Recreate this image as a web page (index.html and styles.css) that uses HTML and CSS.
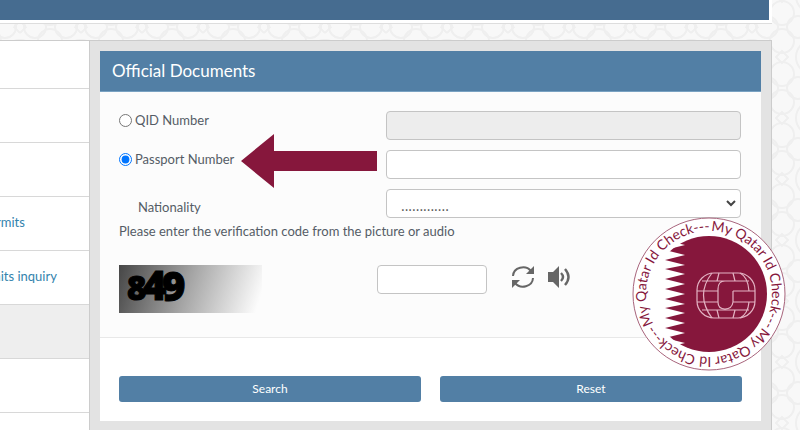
FILE: index.html
```html
<!DOCTYPE html>
<html lang="en">
<head>
<meta charset="utf-8">
<title>Official Documents</title>
<link rel="stylesheet" href="styles.css">
</head>
<body>
<svg class="backdrop" aria-hidden="true">
  <defs>
    <pattern id="lattice" width="61" height="61" patternUnits="userSpaceOnUse" x="752" y="27">
      <g fill="none" stroke="#efefef" stroke-width="2">
        <circle cx="15" cy="0" r="11"/><circle cx="46" cy="0" r="11"/>
        <circle cx="15" cy="61" r="11"/><circle cx="46" cy="61" r="11"/>
        <circle cx="30" cy="14" r="12"/><circle cx="30" cy="47" r="12"/>
        <circle cx="0" cy="30" r="17"/><circle cx="61" cy="30" r="17"/>
        <path d="M30 24l6 6-6 6-6-6zM0-6l6 6-6 6M61-6l-6 6 6 6M0 55l6 6M61 55l-6 6"/>
      </g>
    </pattern>
  </defs>
  <rect width="100%" height="100%" fill="url(#lattice)"/>
</svg>
<div class="page">
  <header class="topbar"><div class="topbar-fill"></div></header>
  <div class="layout">
    <nav class="sidebar" aria-label="Services">
      <ul>
        <li class="first"></li>
        <li></li>
        <li></li>
        <li><a href="#">rmits</a></li>
        <li><a href="#">mits inquiry</a></li>
        <li class="active"></li>
        <li></li>
        <li class="last"></li>
      </ul>
    </nav>
    <main class="panel">
      <form class="card">
        <h1>Official Documents</h1>
        <div class="fields">
          <div class="row">
            <label class="choice"><input type="radio" name="kind">QID Number</label>
            <input class="control" type="text" aria-label="QID Number" disabled>
          </div>
          <div class="row">
            <label class="choice"><input type="radio" name="kind" checked>Passport Number</label>
            <input class="control" type="text" aria-label="Passport Number">
            <svg class="arrow" viewBox="0 0 136 54" aria-hidden="true"><path d="M0 27L33 0v17h103v20H33v17z" fill="#86173c"/></svg>
          </div>
          <div class="row">
            <label class="nationality" for="nationality">Nationality</label>
            <div class="select-wrap">
              <select class="control" id="nationality"><option>.............</option></select>
              <svg class="chevron" viewBox="0 0 10 8" aria-hidden="true"><path d="M1 2l4 4 4-4" fill="none" stroke="#444" stroke-width="2"/></svg>
            </div>
          </div>
          <label class="hint" for="code">Please enter the verification code from the picture or audio</label>
          <div class="verify">
            <svg class="captcha" viewBox="0 0 143 48" role="img" aria-label="Verification picture">
              <defs><linearGradient id="shade" gradientUnits="userSpaceOnUse" x1="0" y1="0" x2="137" y2="46">
                <stop offset="0" stop-color="#464646"/><stop offset=".5" stop-color="#a5a5a5"/><stop offset="1" stop-color="#fcfcfc"/>
              </linearGradient></defs>
              <rect width="143" height="48" fill="url(#shade)"/>
              <g class="digits"><text x="8" y="35" font-size="33">8</text><text x="24" y="35" font-size="40">4</text><text x="43" y="36" font-size="40">9</text></g>
            </svg>
            <input class="control code" id="code" type="text">
            <button class="icon" type="button" aria-label="Refresh picture">
              <svg viewBox="0 0 24 24" width="24" height="24"><g fill="none" stroke="#666" stroke-width="2"><path d="M2 11a10 9 0 0 1 18-5M22 13a10 9 0 0 1-18 5"/></g><path d="M23 1v8h-8zM1 23v-8h8z" fill="#666"/></svg>
            </button>
            <button class="icon" type="button" aria-label="Play audio">
              <svg viewBox="0 0 24 24" width="24" height="24"><path d="M1 7h5l6-6v22l-6-6H1z" fill="#666"/><path d="M14 8q4 4 0 8M18 4q7 8 0 16" fill="none" stroke="#666" stroke-width="2.4"/></svg>
            </button>
          </div>
        </div>
        <div class="actions">
          <button type="submit">Search</button>
          <button type="reset">Reset</button>
        </div>
      </form>
    </main>
  </div>
</div>
<svg class="seal" viewBox="-77 -77 154 154" role="img" aria-label="My Qatar Id Check">
  <defs>
    <clipPath id="disc"><circle r="58"/></clipPath>
    <path id="ring" d="M0-63a63 63 0 0 1 0 126a63 63 0 0 1 0-126"/>
  </defs>
  <circle r="76" fill="#fff" stroke="#a8647c"/>
  <path clip-path="url(#disc)" fill="#86173c" d="M60-60H-24V-59L-44-54L-24-49L-44-44L-24-39L-44-34L-24-29L-44-25L-24-20L-44-15L-24-10L-44-5L-24 0L-44 5L-24 10L-44 14L-24 19L-44 24L-24 29L-44 34L-24 39L-44 44L-24 49L-44 54L-24 59H60z"/>
  <g class="ring-text">
    <text><textPath href="#ring" startOffset="2">My Qatar Id Check---</textPath></text>
    <text transform="rotate(120)"><textPath href="#ring" startOffset="2">My Qatar Id Check---</textPath></text>
    <text transform="rotate(240)"><textPath href="#ring" startOffset="2">My Qatar Id Check---</textPath></text>
  </g>
  <g fill="none" stroke="#e3b3c3" stroke-width="1.2">
    <rect x="-12" y="-21" width="58" height="45" rx="17"/>
    <path d="M-7-13H40M-12-3H9M-12 8H9M-7 16H40M24-3H46M24 8H46M3-21q-17 22 0 45M31-21q8 4 9 18M31 24q8-4 9-16M10-21l-2 8M24-21l2 8M10 24l-2-8M24 24l2-8M26-13H16q-7 0-7 8V8q0 7 7 7t8-7V-3"/>
  </g>
</svg>
</body>
</html>
```
FILE: styles.css
```css
* { box-sizing: border-box; }
body { margin: 0; background: #f8f8f8; color: #555c66; font: 13px/20px Lato, sans-serif; }
.backdrop { position: absolute; inset: 0; width: 100%; height: 100%; z-index: -1; }
.page { margin-right: 28px; min-height: 100vh; display: flex; flex-direction: column; }
.topbar { background: #fff; padding: 0 3px 3px 0; border-bottom: 1px solid #ddd; }
.topbar-fill { height: 20px; background: #466c90; }
.layout { display: flex; flex: 1; margin-top: 16px; border-top: 1px solid #ccc; }
.sidebar { width: 89px; background: #fff; }
.sidebar ul { list-style: none; margin: 0; padding: 0; }
.sidebar li { height: 54px; border-bottom: 1px solid #d8d8d8; display: flex; align-items: center; padding-bottom: 3px; }
.sidebar .first { height: 48px; }
.sidebar .last { height: 16px; border: 0; }
.sidebar .active { background: #eee; }
.sidebar a { color: #3383ad; text-decoration: none; white-space: nowrap; }
.sidebar li:nth-child(5) a { margin-left: -10px; }
.sidebar li:nth-child(4) a { margin-left: -4px; }
.panel { flex: 1; background: #e3e3e3; border: solid #ccc; border-width: 0 1px; padding: 10px 10px 8px; }
.card { background: #fff; }
h1 { margin: 0; padding: 0 12px; background: #527fa5; color: #fff; font: 17px/40px Lato, sans-serif; border-bottom: 1px solid #79a2c2; }
.fields { background: #fcfcfc; border-bottom: 1px solid #e8e8e8; padding: 19px 20px 24px 19px; }
.row { display: grid; grid-template-columns: 267px 1fr; position: relative; margin-bottom: 10px; }
.choice { display: flex; align-items: flex-start; gap: 3px; line-height: 18px; }
.choice input { width: 13px; height: 13px; margin: 3px 0 0; accent-color: #0075ff; }
.nationality { padding: 8px 0 0 19px; }
.control { width: 100%; height: 29px; border: 1px solid #c4c4c4; border-radius: 4px; background: #fff; padding: 0 14px; font: 14px/20px "Open Sans", sans-serif; color: #555; }
.control:disabled { background: #ededed; }
.select-wrap { position: relative; }
select.control { appearance: none; padding-top: 4px; display: block; }
.chevron { position: absolute; right: 5px; top: 10px; width: 10px; height: 8px; }
.arrow { position: absolute; left: 122px; top: -16px; width: 136px; height: 54px; }
.hint { display: block; margin-top: -7px; }
.verify { display: flex; align-items: flex-start; margin-top: 24px; }
.captcha { width: 143px; height: 48px; }
.digits { font-family: "Open Sans", sans-serif; font-weight: 800; stroke: #000; stroke-width: 1; }
.code { width: 110px; margin-left: 115px; }
.icon { border: 0; padding: 0; background: none; width: 24px; height: 24px; margin-left: 12px; }
.code + .icon { margin-left: 24px; }
.icon svg { display: block; }
.actions { display: grid; grid-template-columns: 1fr 1fr; gap: 19px; padding: 38px 19px 19px; }
.actions button { height: 26px; border: 0; border-radius: 3px; background: #527fa5; color: #fff; font: 12px/20px Lato, sans-serif; }
.seal { position: absolute; right: 14px; top: 217px; width: 154px; height: 154px; }
.ring-text { font: 14px Lato, sans-serif; fill: #86173c; }
```
